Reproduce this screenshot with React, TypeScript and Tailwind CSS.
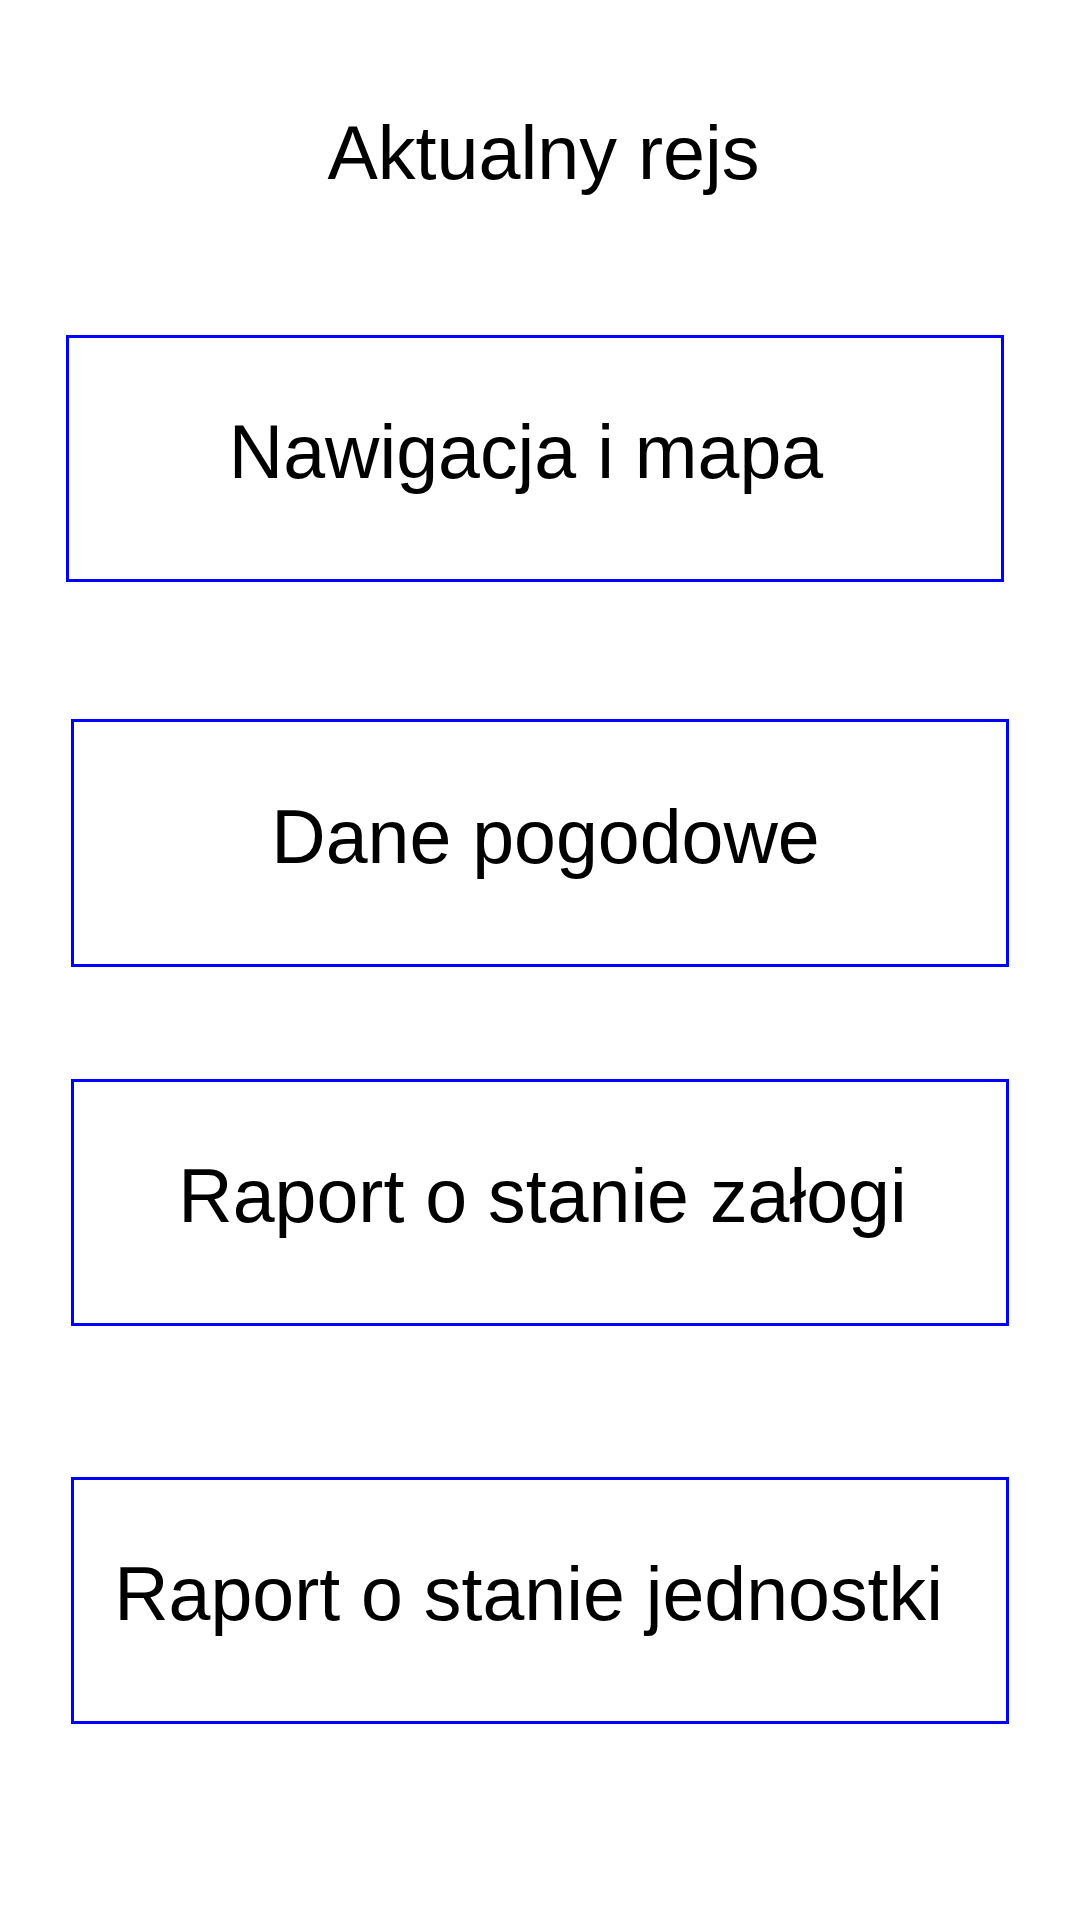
export default function App() {
  const font = { fontFamily: '"Liberation Sans", Arial, sans-serif' };
  return (
    <div className="w-[1080px] h-[1920px] bg-white text-black" style={font}>
      <div className="pt-[116px] flex justify-center pl-[7px]">
        <h1 className="text-[75.5px] leading-none font-normal">Aktualny rejs</h1>
      </div>
      <div className="mt-[143px] ml-[66px] w-[938px] h-[247px] border-[3px] border-[#0000ff] flex items-center justify-center pr-[18px] pb-[10px]">
        <span className="text-[75.3px] leading-none">Nawigacja i mapa</span>
      </div>
      <div className="mt-[137px] ml-[71px] w-[938px] h-[248px] border-[3px] border-[#0000ff] flex items-center justify-center pl-[11px] pb-[10px]">
        <span className="text-[75.3px] leading-none">Dane pogodowe</span>
      </div>
      <div className="mt-[112px] ml-[71px] w-[938px] h-[247px] border-[3px] border-[#0000ff] flex items-center justify-center pl-[5px] pb-[10px]">
        <span className="text-[75.3px] leading-none">Raport o stanie załogi</span>
      </div>
      <div className="mt-[151px] ml-[71px] w-[938px] h-[247px] border-[3px] border-[#0000ff] flex items-center justify-center pr-[23px] pb-[10px]">
        <span className="text-[75.3px] leading-none">Raport o stanie jednostki</span>
      </div>
    </div>
  );
}
